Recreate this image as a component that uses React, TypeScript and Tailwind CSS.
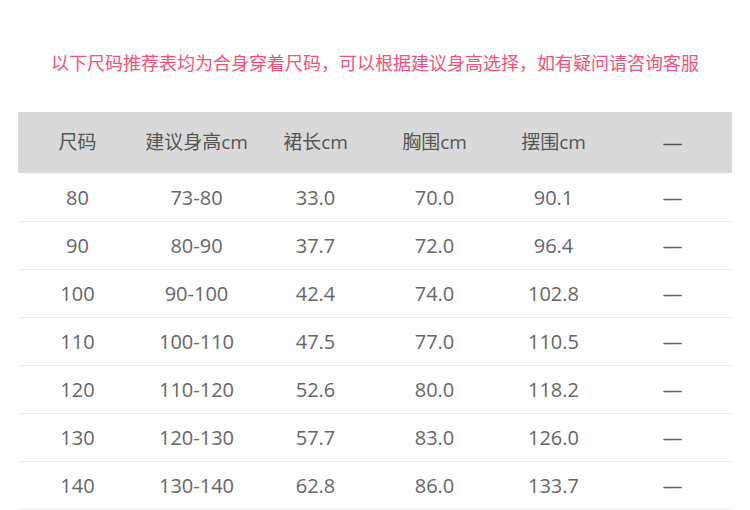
import React from "react";

const rows = [
  ["80", "73-80", "33.0", "70.0", "90.1", "—"],
  ["90", "80-90", "37.7", "72.0", "96.4", "—"],
  ["100", "90-100", "42.4", "74.0", "102.8", "—"],
  ["110", "100-110", "47.5", "77.0", "110.5", "—"],
  ["120", "110-120", "52.6", "80.0", "118.2", "—"],
  ["130", "120-130", "57.7", "83.0", "126.0", "—"],
  ["140", "130-140", "62.8", "86.0", "133.7", "—"],
];
const head = ["尺码", "建议身高cm", "裙长cm", "胸围cm", "摆围cm", "—"];

export default function App() {
  return (
    <div
      className="w-[750px] h-[510px] bg-white overflow-hidden"
      style={{ fontFamily: '"Open Sans", "Noto Sans CJK SC", sans-serif' }}
    >
      <div className="pt-[50px] h-[112px] text-center text-[18px] leading-[26px] text-[#f5507a]">
        以下尺码推荐表均为合身穿着尺码，可以根据建议身高选择，如有疑问请咨询客服
      </div>
      <div className="mx-[18px] w-[714px]">
        <div className="grid grid-cols-6 h-[61px] bg-[#d9d9d9] items-center text-[19px] text-[#555]">
          {head.map((h, i) => (
            <div key={i} className={i === 5 ? "text-center text-[20px]" : "text-center"}>{h}</div>
          ))}
        </div>
        <div className="h-px" />
        {rows.map((r, i) => (
          <div key={i} className="grid grid-cols-6 h-[48px] items-center border-b border-[#ececec] text-[20px] text-[#666]">
            {r.map((c, j) => (
              <div key={j} className="text-center">{c}</div>
            ))}
          </div>
        ))}
      </div>
    </div>
  );
}
